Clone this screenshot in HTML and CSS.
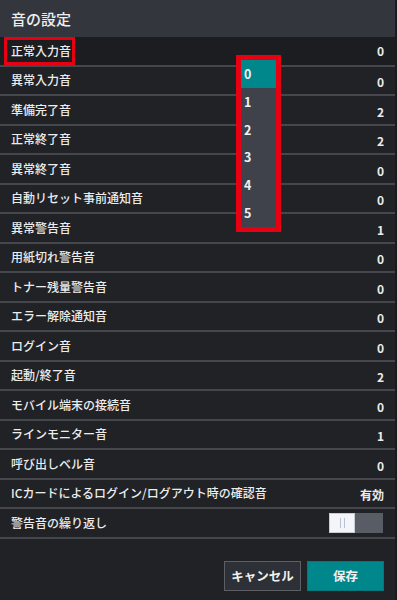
FILE: index.html
```html
<!DOCTYPE html>
<html lang="ja">
<head>
<meta charset="utf-8">
<link rel="stylesheet" href="styles.css">
</head>
<body>
<div class="panel">
  <div class="title">音の設定</div>
  <div class="list">
    <div class="row"><span class="label hl">正常入力音</span><span class="val">0</span></div>
    <div class="row"><span class="label">異常入力音</span><span class="val">0</span></div>
    <div class="row"><span class="label">準備完了音</span><span class="val">2</span></div>
    <div class="row"><span class="label">正常終了音</span><span class="val">2</span></div>
    <div class="row"><span class="label">異常終了音</span><span class="val">0</span></div>
    <div class="row"><span class="label">自動リセット事前通知音</span><span class="val">0</span></div>
    <div class="row"><span class="label">異常警告音</span><span class="val">1</span></div>
    <div class="row"><span class="label">用紙切れ警告音</span><span class="val">0</span></div>
    <div class="row"><span class="label">トナー残量警告音</span><span class="val">0</span></div>
    <div class="row"><span class="label">エラー解除通知音</span><span class="val">0</span></div>
    <div class="row"><span class="label">ログイン音</span><span class="val">0</span></div>
    <div class="row"><span class="label">起動/終了音</span><span class="val">2</span></div>
    <div class="row"><span class="label">モバイル端末の接続音</span><span class="val">0</span></div>
    <div class="row"><span class="label">ラインモニター音</span><span class="val">1</span></div>
    <div class="row"><span class="label">呼び出しベル音</span><span class="val">0</span></div>
    <div class="row"><span class="label">ICカードによるログイン/ログアウト時の確認音</span><span class="val">有効</span></div>
    <div class="row"><span class="label">警告音の繰り返し</span>
      <span class="toggle"><span class="knob"><span class="grip"></span></span><span class="track"></span></span>
    </div>
  </div>
  <div class="footer">
    <button class="btn cancel">キャンセル</button>
    <button class="btn save">保存</button>
  </div>
  <div class="dropdown">
    <div class="opt sel">0</div>
    <div class="opt">1</div>
    <div class="opt">2</div>
    <div class="opt">3</div>
    <div class="opt">4</div>
    <div class="opt">5</div>
  </div>
</div>
</body>
</html>
```

FILE: styles.css
```css
html, body {
  margin: 0;
  padding: 0;
  background: #202226;
}
body {
  font-family: "Noto Sans CJK JP", "Noto Sans", sans-serif;
  color: #ececec;
  width: 397px;
  height: 600px;
  overflow: hidden;
}
.panel {
  position: relative;
  width: 397px;
  height: 600px;
  background: #202226;
  box-sizing: border-box;
  border-right: 2px solid #1a1b1e;
}
.title {
  height: 37px;
  background: #33363d;
  font-size: 15px;
  font-weight: 500;
  line-height: 37px;
  padding-left: 11px;
  color: #eeeeee;
}
.list {
  display: flex;
  flex-direction: column;
}
.row {
  height: 27.5px;
  border-bottom: 2px solid #45474d;
  display: flex;
  align-items: center;
  justify-content: space-between;
  padding: 0 11px 0 11px;
  font-size: 12px;
  font-weight: 500;
}
.row:first-child {
  background: #1c1d21;
}
.label {
  display: inline-block;
  line-height: 18px;
}
.label.hl {
  border: 3px solid #e60012;
  padding: 2px 1px 2px 4px;
  margin-left: -7px;
  margin-top: 1px;
}
.val {
  font-weight: 700;
  margin-top: 3px;
}
.row:first-child .val { margin-top: 0; }
.toggle {
  display: flex;
  width: 54px;
  height: 20px;
  margin-right: 1px;
}
.knob {
  width: 26px;
  height: 20px;
  background: #f4f5f8;
  box-sizing: border-box;
  border: 1px solid #c8ccd4;
  display: flex;
  align-items: center;
  justify-content: center;
}
.grip {
  width: 3px;
  height: 10px;
  border-left: 1px solid #b8c2d4;
  border-right: 1px solid #b8c2d4;
}
.track {
  flex: 1;
  background: #585c65;
}
.footer {
  display: flex;
  justify-content: flex-end;
  gap: 6px;
  padding: 22px 11px 0 0;
}
.btn {
  width: 77px;
  height: 30px;
  font-family: "Noto Sans CJK JP", "Noto Sans", sans-serif;
  font-size: 12.5px;
  font-weight: 700;
  color: #f0f0f0;
  padding: 0;
  box-sizing: border-box;
}
.cancel {
  background: #2d3036;
  border: 1px solid #5c5f66;
}
.save {
  background: #00878c;
  border: 1px solid #00787c;
}
.dropdown {
  position: absolute;
  left: 236px;
  top: 55px;
  width: 35px;
  border: 5px solid #e60012;
  background: #3f424a;
  display: flex;
  flex-direction: column;
}
.opt {
  height: 27.8px;
  line-height: 27.8px;
  padding-left: 3px;
  font-size: 12.5px;
  font-weight: 700;
  color: #f0f0f0;
}
.opt.sel {
  background: #00878c;
}
```
